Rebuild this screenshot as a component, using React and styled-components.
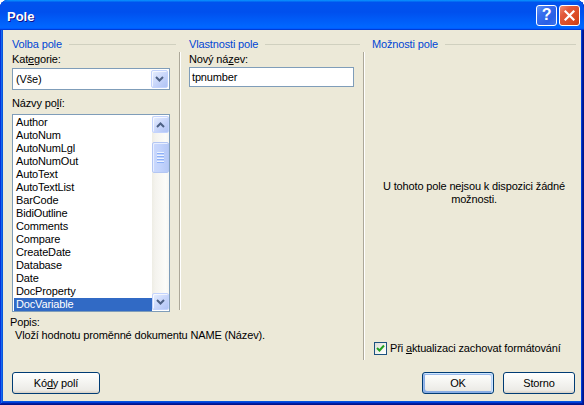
import React from 'react';
import styled, { createGlobalStyle, css } from 'styled-components';

const Global = createGlobalStyle`
  html, body { margin: 0; padding: 0; background: #ffffff; }
  body { font-family: "Liberation Sans", Arial, sans-serif; font-size: 11px; color: #000; letter-spacing: -0.15px; }
  * { box-sizing: border-box; }
`;

const Window = styled.div`
  width: 584px;
  height: 405px;
  display: flex;
  flex-direction: column;
  background: #0855dd;
  border-radius: 8px 8px 0 0;
  overflow: hidden;
  box-shadow: inset -1px -1px #00138c, inset 1px 1px #0831d9, inset -2px -2px #001ea0,
    inset 2px 2px #166aee, inset -3px -3px #003bda, inset 3px 3px #0855dd;
`;

const TitleBar = styled.div`
  height: 30px;
  flex: none;
  display: flex;
  align-items: center;
  padding: 0 4px 0 7px;
  background: linear-gradient(180deg, #0997ff 0%, #0053ee 8%, #0050ee 40%, #0066ff 88%, #0066ff 93%, #005bff 95%, #003dd7 96%, #003dd7 100%);
`;

const TitleText = styled.div`
  flex: 1;
  padding-top: 3px;
  font-family: "Liberation Sans", Arial, sans-serif;
  font-weight: bold;
  font-size: 13px;
  line-height: 15px;
  letter-spacing: 0;
  color: #fff;
  text-shadow: 1px 1px #0f1089;
`;

const CaptionBtn = styled.div`
  width: 21px;
  height: 21px;
  margin-left: 2px;
  border: 1px solid #fff;
  border-radius: 3px;
  display: flex;
  align-items: center;
  justify-content: center;
  color: #fff;
  font-family: "Liberation Sans", Arial, sans-serif;
  font-weight: bold;
  font-size: 16px;
  line-height: 1;
  ${(p) =>
    p.$close
      ? css`
          background: linear-gradient(135deg, #f08e72 0%, #e2593b 30%, #d9491f 75%, #c43c12 100%);
        `
      : css`
          background: linear-gradient(135deg, #5f93f5 0%, #3a6fee 30%, #2a5fe6 70%, #3c74ee 100%);
        `}
`;

const Body = styled.div`
  flex: 1;
  margin: 0 3px 4px 3px;
  background: #ece9d8;
  display: flex;
  flex-direction: column;
  padding: 8px 5px 0 7px;
`;

const Main = styled.div`
  height: 323px;
  display: flex;
`;

const LeftPart = styled.div`
  display: flex;
  flex-direction: column;
`;

const TopRow = styled.div`
  display: flex;
`;

const Column = styled.div`
  width: ${(p) => p.$w}px;
  margin-left: ${(p) => p.$ml}px;
  display: flex;
  flex-direction: column;
`;

const VSep = styled.div`
  align-self: flex-start;
  width: 2px;
  margin-left: 3px;
  margin-top: 14px;
  height: ${(p) => p.$h}px;
  border-left: 1px solid #aca899;
  border-right: 1px solid #ffffff;
`;

const Heading = styled.div`
  display: flex;
  align-items: center;
  gap: 7px;
  height: 13px;
  line-height: 13px;
  color: #0046d5;
  white-space: nowrap;
  &::after {
    content: '';
    flex: 1;
    height: 1px;
    background: #d0d0bf;
  }
`;

const Label = styled.div`
  line-height: 13px;
  margin-top: ${(p) => p.$mt || 0}px;
  white-space: nowrap;
`;

const Combo = styled.div`
  margin-top: 2px;
  width: 158px;
  height: 22px;
  display: flex;
  padding: 1px;
  border: 1px solid #7f9db9;
  background: #fff;
`;

const ComboText = styled.div`
  flex: 1;
  line-height: 18px;
  padding-left: 2px;
`;

const XpBtn = styled.div`
  width: 17px;
  height: ${(p) => p.$h || 17}px;
  flex: none;
  display: flex;
  align-items: center;
  justify-content: center;
  border: 1px solid #c3d3fd;
  border-radius: 2px;
  background: linear-gradient(135deg, #e6eefc 0%, #d0dcfc 40%, #bacbf7 80%, #b0c4f6 100%);
  box-shadow: inset 1px 1px rgba(255, 255, 255, 0.7);
`;

const TextBox = styled.div`
  margin-top: 1px;
  width: 165px;
  height: 20px;
  border: 1px solid #7f9db9;
  background: #fff;
  line-height: 18px;
  padding-left: 2px;
`;

const ListBox = styled.div`
  margin-top: 4px;
  width: 158px;
  height: 198px;
  border: 1px solid #7f9db9;
  background: #fff;
  padding: 1px 0 1px 1px;
  display: flex;
  overflow: hidden;
`;

const Items = styled.div`
  flex: 1;
  display: flex;
  flex-direction: column;
`;

const Item = styled.div`
  height: 13px;
  line-height: 13px;
  padding-left: 2px;
  white-space: nowrap;
  ${(p) =>
    p.$sel &&
    css`
      background: #316ac5;
      color: #fff;
    `}
`;

const ScrollBar = styled.div`
  width: 17px;
  display: flex;
  flex-direction: column;
  background: linear-gradient(90deg, #eeede5 0%, #f4f3ee 20%, #fcfcf9 80%, #f6f6f2 100%);
`;

const Thumb = styled.div`
  margin-top: 9px;
  height: 31px;
  border: 1px solid #b3c6f3;
  border-radius: 2px;
  background: linear-gradient(90deg, #cbd9fc 0%, #c2d3fc 50%, #b6c9f7 100%);
  box-shadow: inset 1px 1px #e8efff;
  display: flex;
  flex-direction: column;
  align-items: center;
  justify-content: center;
  gap: 1px;
`;

const Grip = styled.div`
  width: 7px;
  height: 1px;
  background: #eef4fe;
  box-shadow: 0 1px #8cb0f8;
  margin-bottom: 1px;
`;

const Spacer = styled.div`
  flex: 1;
`;

const Popis = styled.div`
  margin-top: 4px;
  line-height: 13px;
`;

const Desc = styled.div`
  line-height: 13px;
  padding-left: 5px;
  white-space: nowrap;
`;

const Message = styled.div`
  margin-top: 129px;
  text-align: center;
  line-height: 13px;
`;

const CheckRow = styled.div`
  margin-top: auto;
  margin-bottom: 6px;
  margin-left: 2px;
  display: flex;
  align-items: center;
  gap: 3px;
  height: 13px;
  line-height: 13px;
  white-space: nowrap;
`;

const CheckBox = styled.div`
  width: 13px;
  height: 13px;
  flex: none;
  border: 1px solid #1c5180;
  background: linear-gradient(135deg, #dcdcd7 0%, #f4f4f0 60%, #ffffff 100%);
  display: flex;
  align-items: center;
  justify-content: center;
`;

const ButtonRow = styled.div`
  margin-top: 11px;
  display: flex;
  align-items: center;
  padding-left: 2px;
`;

const Button = styled.div`
  width: ${(p) => p.$w}px;
  height: 22px;
  margin-left: ${(p) => p.$ml || 0}px;
  border: 1px solid #003c74;
  border-radius: 3px;
  background: linear-gradient(180deg, #ffffff 0%, #f6f6f3 40%, #ecebe6 86%, #d6d0c5 100%);
  display: flex;
  align-items: center;
  justify-content: center;
  line-height: 13px;
  ${(p) =>
    p.$default &&
    css`
      box-shadow: inset -1px 1px #cee7ff, inset 1px 2px #98b8ea, inset -2px 2px #bcd4f6,
        inset 1px -1px #89ade4, inset 2px -2px #89ade4;
    `}
`;

const Chevron = ({ up }) => (
  <svg width="9" height="6" viewBox="0 0 9 6">
    <polyline
      points={up ? '1,5 4.5,1.5 8,5' : '1,1 4.5,4.5 8,1'}
      fill="none"
      stroke="#4d6185"
      strokeWidth="2"
    />
  </svg>
);

const items = [
  'Author', 'AutoNum', 'AutoNumLgl', 'AutoNumOut', 'AutoText', 'AutoTextList', 'BarCode',
  'BidiOutline', 'Comments', 'Compare', 'CreateDate', 'Database', 'Date', 'DocProperty', 'DocVariable',
];

export default function App() {
  return (
    <>
      <Global />
      <Window>
        <TitleBar>
          <TitleText>Pole</TitleText>
          <CaptionBtn>?</CaptionBtn>
          <CaptionBtn $close>
            <svg width="11" height="11" viewBox="0 0 11 11">
              <path d="M1.5 1.5 L9.5 9.5 M9.5 1.5 L1.5 9.5" stroke="#fff" strokeWidth="2.2" strokeLinecap="square" />
            </svg>
          </CaptionBtn>
        </TitleBar>
        <Body>
          <Main>
            <LeftPart>
              <TopRow>
                <Column $w={164} $ml={2}>
                  <Heading>Volba pole</Heading>
                  <Label $mt={2}>Kat<u>e</u>gorie:</Label>
                  <Combo>
                    <ComboText>(Vše)</ComboText>
                    <XpBtn $h={18}>
                      <Chevron />
                    </XpBtn>
                  </Combo>
                  <Label $mt={7}>Názvy po<u>l</u>í:</Label>
                  <ListBox>
                    <Items>
                      {items.map((it) => (
                        <Item key={it} $sel={it === 'DocVariable'}>
                          {it}
                        </Item>
                      ))}
                    </Items>
                    <ScrollBar>
                      <XpBtn>
                        <Chevron up />
                      </XpBtn>
                      <Thumb>
                        <Grip />
                        <Grip />
                        <Grip />
                        <Grip />
                      </Thumb>
                      <Spacer />
                      <XpBtn>
                        <Chevron />
                      </XpBtn>
                    </ScrollBar>
                  </ListBox>
                </Column>
                <VSep $h={258} />
                <Column $w={171} $ml={8}>
                  <Heading>Vlastnosti pole</Heading>
                  <Label $mt={2}>Nový ná<u>z</u>ev:</Label>
                  <TextBox>tpnumber</TextBox>
                </Column>
              </TopRow>
              <Popis>Popis:</Popis>
              <Desc>Vloží hodnotu proměnné dokumentu NAME (Název).</Desc>
            </LeftPart>
            <VSep $h={308} />
            <Column $w={204} $ml={7}>
              <Heading>Možnosti pole</Heading>
              <Message>
                U tohoto pole nejsou k dispozici žádné
                <br />
                možnosti.
              </Message>
              <CheckRow>
                <CheckBox>
                  <svg width="9" height="9" viewBox="0 0 9 9">
                    <polyline points="1,4 3.5,6.5 8,1.5" fill="none" stroke="#21a121" strokeWidth="2" />
                  </svg>
                </CheckBox>
                <span>
                  Při <u>a</u>ktualizaci zachovat formátování
                </span>
              </CheckRow>
            </Column>
          </Main>
          <ButtonRow>
            <Button $w={88}>
              Kó<u>d</u>y polí
            </Button>
            <Spacer />
            <Button $w={72} $default>
              OK
            </Button>
            <Button $w={72} $ml={9}>
              Storno
            </Button>
            <div style={{ width: 1 }} />
          </ButtonRow>
        </Body>
      </Window>
    </>
  );
}
